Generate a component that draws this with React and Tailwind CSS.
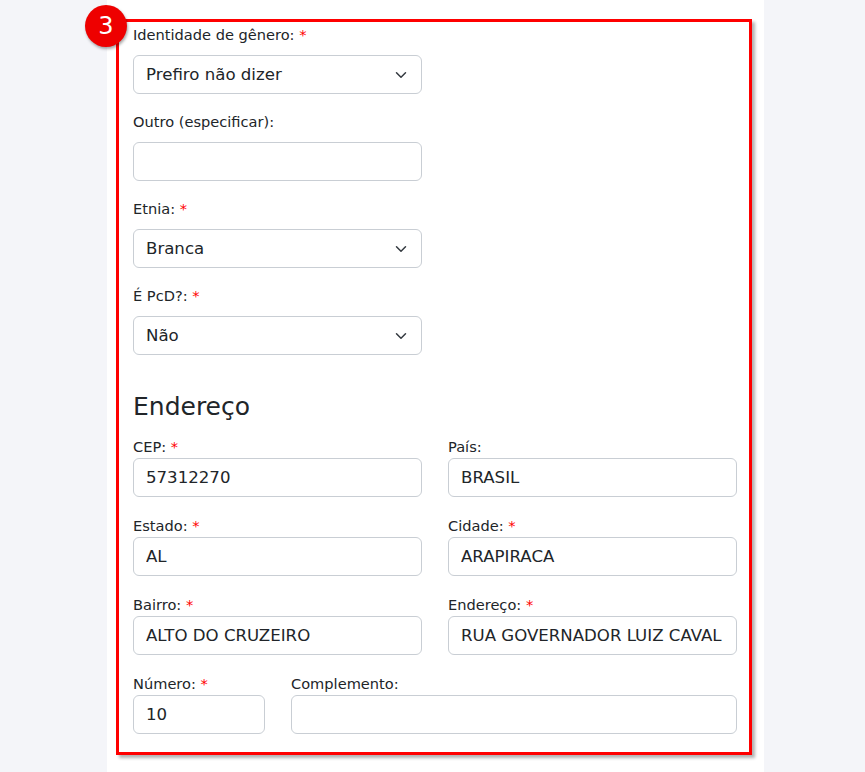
import React from "react";

const font = { fontFamily: "'DejaVu Sans', 'Liberation Sans', sans-serif" };

function Chevron() {
  return (
    <svg className="absolute right-[12px] top-1/2 -translate-y-1/2" width="16" height="12" viewBox="0 0 16 16" fill="none">
      <path d="m2 5 6 6 6-6" stroke="#343a40" strokeWidth="2" strokeLinecap="round" strokeLinejoin="round" />
    </svg>
  );
}

function Label({ text, req, mb }) {
  return (
    <div className={`h-[21px] leading-[19px] text-[14.6px] text-[#212529] whitespace-nowrap ${mb ? "mb-[9px]" : ""}`}>
      {text}
      {req && <span className="text-[#ff0000]"> *</span>}
    </div>
  );
}

function Box({ value, select, className = "" }) {
  return (
    <div className={`relative h-[39px] border border-[#c9ced4] rounded-md bg-white px-3 pt-[2px] flex items-center text-[16.6px] text-[#212529] ${className}`}>
      <div className="flex-1 overflow-hidden whitespace-nowrap">{value}</div>
      {select && <Chevron />}
    </div>
  );
}

function Field1({ label, req, value, select, last }) {
  return (
    <div className={last ? "" : "mb-[18px]"}>
      <Label text={label} req={req} mb />
      <Box value={value} select={select} className="w-[289px]" />
    </div>
  );
}

function Field2({ label, req, value }) {
  return (
    <div>
      <Label text={label} req={req} />
      <Box value={value} />
    </div>
  );
}

export default function App() {
  return (
    <div className="min-h-[772px] w-full bg-[#f4f5f9] flex" style={font}>
      <div className="ml-[107px] w-[657px] bg-white pt-[19px] pl-[9px] pb-[15px]">
        <div className="relative w-[636px] border-[3px] border-[#ff0000] pt-[3px] pl-[14px] pr-[12px] pb-[18px] shadow-[3px_3px_3px_rgba(0,0,0,0.3)]">
          <div className="absolute left-[-34px] top-[-17px] w-[42px] h-[42px] rounded-full bg-[#ee0000] flex items-center justify-center text-white text-[24px] shadow-[1px_2px_3px_rgba(0,0,0,0.35)]">
            3
          </div>
          <Field1 label="Identidade de gênero:" req value="Prefiro não dizer" select />
          <Field1 label="Outro (especificar):" value="" />
          <Field1 label="Etnia:" req value="Branca" select />
          <Field1 label="É PcD?:" req value="Não" select last />

          <h4 className="mt-[37px] mb-[15px] text-[25px] leading-[30px] text-[#212529]">Endereço</h4>

          <div className="grid grid-cols-2 gap-x-[26px] gap-y-[19px]">
            <Field2 label="CEP:" req value="57312270" />
            <Field2 label="País:" value="BRASIL" />
            <Field2 label="Estado:" req value="AL" />
            <Field2 label="Cidade:" req value="ARAPIRACA" />
            <Field2 label="Bairro:" req value="ALTO DO CRUZEIRO" />
            <Field2 label="Endereço:" req value="RUA GOVERNADOR LUIZ CAVAL" />
          </div>
          <div className="mt-[19px] grid grid-cols-[132px_1fr] gap-x-[26px]">
            <Field2 label="Número:" req value="10" />
            <Field2 label="Complemento:" value="" />
          </div>
        </div>
      </div>
    </div>
  );
}
